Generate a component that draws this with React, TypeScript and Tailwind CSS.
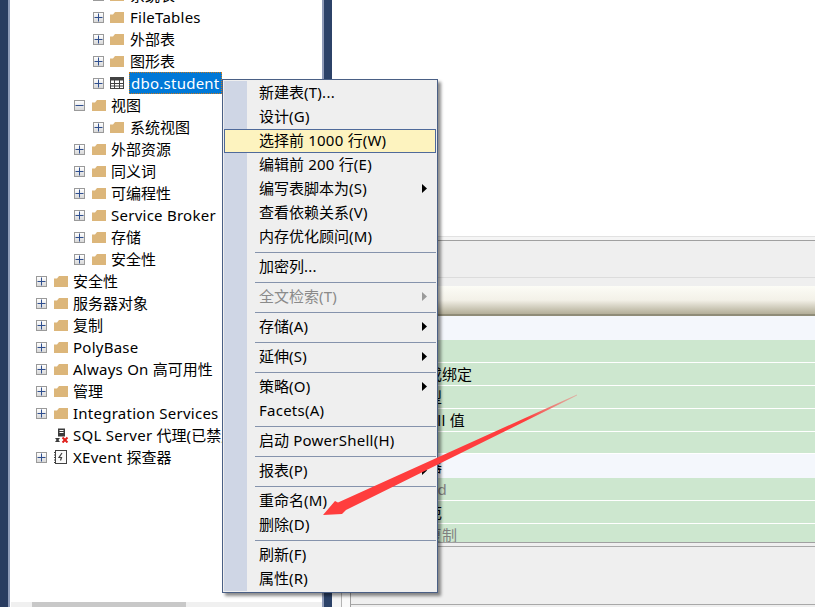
import React from "react";

const Txt = ({ t }: { t: string }) => (
  <>
    {t.split(/([\x00-\x7f]+)/).map((part, i) =>
      /^[\x00-\x7f]+$/.test(part) ? (
        <span key={i} className="tracking-[0.25px]">{part}</span>
      ) : (
        <span key={i}>{part}</span>
      )
    )}
  </>
);

const Box = ({ minus }: { minus?: boolean }) => (
  <span className="w-[11px] h-[11px] border border-[#9a9a9a] bg-gradient-to-b from-white to-[#d8d8d8] flex items-center justify-center relative">
    <svg width="9" height="9" viewBox="0 0 9 9">
      <rect x="0.5" y="4" width="8" height="1" fill="#2f4f8f" />
      {!minus && <rect x="4" y="0.5" width="1" height="8" fill="#2f4f8f" />}
    </svg>
  </span>
);

const Folder = () => (
  <svg width="14" height="12" viewBox="0 0 14 12">
    <path d="M0 3.5 H3 L5 1 H14 V12 H0 Z" fill="#dcb67a" />
  </svg>
);

const TableIcon = () => (
  <svg width="14" height="12" viewBox="0 0 14 12">
    <rect x="0.5" y="0.5" width="13" height="11" fill="#fff" stroke="#424242" />
    <rect x="1" y="1" width="12" height="2.5" fill="#424242" />
    <path d="M1 6.5 H13 M1 9 H13 M4.5 3 V11 M9.5 3 V11" stroke="#424242" strokeWidth="1" />
  </svg>
);

const AgentIcon = () => (
  <svg width="15" height="15" viewBox="0 0 15 15">
    <rect x="4" y="0.5" width="7" height="8" fill="#3b3b3b" />
    <rect x="5.5" y="2" width="4" height="1" fill="#fff" />
    <rect x="5.5" y="4" width="4" height="1" fill="#fff" />
    <path d="M1 10 H6 L4.5 12 L6 14 H1 L2.5 12 Z" fill="#3b3b3b" />
    <path d="M8.5 9.5 L13.5 14.5 M13.5 9.5 L8.5 14.5" stroke="#e0201c" strokeWidth="2" />
  </svg>
);

const XEventIcon = () => (
  <svg width="13" height="14" viewBox="0 0 13 14">
    <rect x="1.5" y="0.5" width="11" height="13" fill="#fafafa" stroke="#424242" />
    <path d="M0 2.5 H2 M0 5 H2 M0 7.5 H2 M0 10 H2 M0 12.5 H2" stroke="#424242" />
    <path d="M8 3 L5 7.5 H7.5 L6.5 10.5" fill="none" stroke="#424242" strokeWidth="1.2" />
  </svg>
);

type Lv = 1 | 2 | 3;
type Row = { t: string; lv: Lv; box?: "plus" | "minus"; icon?: "folder" | "table" | "agent" | "xevent"; sel?: boolean };

const rows: Row[] = [
  { t: "系统表", lv: 3, box: "plus", icon: "folder" },
  { t: "FileTables", lv: 3, box: "plus", icon: "folder" },
  { t: "外部表", lv: 3, box: "plus", icon: "folder" },
  { t: "图形表", lv: 3, box: "plus", icon: "folder" },
  { t: "dbo.student", lv: 3, box: "plus", icon: "table", sel: true },
  { t: "视图", lv: 2, box: "minus", icon: "folder" },
  { t: "系统视图", lv: 3, box: "plus", icon: "folder" },
  { t: "外部资源", lv: 2, box: "plus", icon: "folder" },
  { t: "同义词", lv: 2, box: "plus", icon: "folder" },
  { t: "可编程性", lv: 2, box: "plus", icon: "folder" },
  { t: "Service Broker", lv: 2, box: "plus", icon: "folder" },
  { t: "存储", lv: 2, box: "plus", icon: "folder" },
  { t: "安全性", lv: 2, box: "plus", icon: "folder" },
  { t: "安全性", lv: 1, box: "plus", icon: "folder" },
  { t: "服务器对象", lv: 1, box: "plus", icon: "folder" },
  { t: "复制", lv: 1, box: "plus", icon: "folder" },
  { t: "PolyBase", lv: 1, box: "plus", icon: "folder" },
  { t: "Always On 高可用性", lv: 1, box: "plus", icon: "folder" },
  { t: "管理", lv: 1, box: "plus", icon: "folder" },
  { t: "Integration Services", lv: 1, box: "plus", icon: "folder" },
  { t: "SQL Server 代理(已禁用)", lv: 1, icon: "agent" },
  { t: "XEvent 探查器", lv: 1, box: "plus", icon: "xevent" },
];

const TreeRow = ({ r }: { r: Row }) => {
  const pad = r.lv === 3 ? "pl-[83px]" : r.lv === 2 ? "pl-[64px]" : "pl-[26px]";
  const slot = r.lv === 3 ? "w-[17px]" : "w-[18px]";
  const iconSlot = r.lv === 3 ? "w-[20px]" : "w-[19px]";
  return (
    <div className={`h-[22px] flex items-center shrink-0 whitespace-nowrap ${pad}`}>
      <span className={`${slot} shrink-0 flex`}>{r.box && <Box minus={r.box === "minus"} />}</span>
      <span className={`${iconSlot} shrink-0 flex`}>
        {r.icon === "folder" && <Folder />}
        {r.icon === "table" && <TableIcon />}
        {r.icon === "agent" && <AgentIcon />}
        {r.icon === "xevent" && <XEventIcon />}
      </span>
      {r.sel ? (
        <span className="h-[22px] -ml-px px-px flex items-center bg-[#0078d7] text-white border border-dotted border-[#c87a1e]">
          <span><Txt t={r.t} /></span>
        </span>
      ) : (
        <span className="text-black"><Txt t={r.t} /></span>
      )}
    </div>
  );
};

type Item = { t?: string; sep?: boolean; arrow?: boolean; hi?: boolean; dis?: boolean };
const items: Item[] = [
  { t: "新建表(T)..." },
  { t: "设计(G)" },
  { t: "选择前 1000 行(W)", hi: true },
  { t: "编辑前 200 行(E)" },
  { t: "编写表脚本为(S)", arrow: true },
  { t: "查看依赖关系(V)" },
  { t: "内存优化顾问(M)" },
  { sep: true },
  { t: "加密列..." },
  { sep: true },
  { t: "全文检索(T)", arrow: true, dis: true },
  { sep: true },
  { t: "存储(A)", arrow: true },
  { sep: true },
  { t: "延伸(S)", arrow: true },
  { sep: true },
  { t: "策略(O)", arrow: true },
  { t: "Facets(A)" },
  { sep: true },
  { t: "启动 PowerShell(H)" },
  { sep: true },
  { t: "报表(P)", arrow: true },
  { sep: true },
  { t: "重命名(M)" },
  { t: "删除(D)" },
  { sep: true },
  { t: "刷新(F)" },
  { t: "属性(R)" },
];

const Menu = () => (
  <div className="absolute left-[222px] top-[79px] w-[216px] h-[514px] border border-[#4a5f85] bg-[#efefef] py-px px-px shadow-[3px_3px_3px_rgba(0,0,0,0.45)]">
    <div className="relative flex flex-col h-full">
      <div className="absolute left-0 top-0 bottom-0 w-[23px] bg-[#cfd6e5]" />
      {items.map((it, i) =>
        it.sep ? (
          <div key={i} className="relative h-[6px] shrink-0 flex items-center pl-[31px] pr-0">
            <div className="h-px w-full bg-[#8593ac]" />
          </div>
        ) : (
          <div
            key={i}
            className={`relative h-[24px] shrink-0 flex items-center whitespace-nowrap ${
              it.hi ? "border border-[#4f6a9a] bg-[#fdf3bf] pl-[34px] pb-[2px]" : "pl-[35px] pb-[2px]"
            } ${it.dis ? "text-[#8a8a8a]" : "text-black"}`}
          >
            <span><Txt t={it.t ?? ""} /></span>
            {it.arrow && (
              <svg className="absolute right-[9px] top-[7px]" width="5" height="9" viewBox="0 0 5 9">
                <path d="M0 0 L5 4.5 L0 9 Z" fill={it.dis ? "#9a9a9a" : "#000"} />
              </svg>
            )}
          </div>
        )
      )}
    </div>
  </div>
);

type GR = { t: string; kind: "blue" | "green"; gray?: boolean; h: string };
const grid: GR[] = [
  { t: "(常规)", kind: "blue", h: "h-[24px]" },
  { t: "名称", kind: "green", h: "h-[23px]" },
  { t: "默认值或绑定", kind: "green", h: "h-[23px]" },
  { t: "数据类型", kind: "green", h: "h-[23px]" },
  { t: "允许 Null 值", kind: "green", h: "h-[23px]" },
  { t: "长度", kind: "green", h: "h-[22px]" },
  { t: "表设计器", kind: "blue", h: "h-[24px]" },
  { t: "RowGuid", kind: "green", gray: true, h: "h-[23px]" },
  { t: "标识规范", kind: "green", h: "h-[23px]" },
  { t: "不用于复制", kind: "green", gray: true, h: "h-[23px]" },
];

const Arrow = () => (
  <svg className="absolute left-0 top-0 pointer-events-none" width="815" height="607" viewBox="0 0 815 607">
    <defs>
      <linearGradient id="arrowFade" gradientUnits="userSpaceOnUse" x1="323" y1="515" x2="577" y2="395">
        <stop offset="0" stopColor="#ff3d3d" />
        <stop offset="0.8" stopColor="#ff3d3d" />
        <stop offset="1" stopColor="#e0a89c" stopOpacity="0.8" />
      </linearGradient>
    </defs>
    <polygon points="323,515 335,501 338,502.5 577,394.5 577,395.5 346,510 342,514" fill="url(#arrowFade)" />
  </svg>
);

export default function App() {
  return (
    <div className="relative w-[815px] h-[607px] overflow-hidden flex bg-white text-[15px] leading-[22px] font-['Noto_Sans','Noto_Sans_CJK_SC',sans-serif]">
      <div className="w-2 shrink-0 bg-[#293c60]" />
      <div className="w-[2px] shrink-0 bg-[#8f9bb8]" />
      <div className="w-[312px] shrink-0 flex flex-col">
        <div className="flex-1 min-h-0 overflow-hidden flex flex-col">
          <div className="-mt-[16px] flex flex-col">
            {rows.map((r, i) => (
              <TreeRow key={i} r={r} />
            ))}
          </div>
        </div>
        <div className="h-[5px] shrink-0 ml-px bg-[#f0f0f0] pl-[21px]">
          <div className="w-[154px] h-full bg-[#c8c8c8]" />
        </div>
      </div>
      <div className="w-[2px] shrink-0 bg-[#8f9bb8]" />
      <div className="w-[8px] shrink-0 bg-[#2c4268]" />
      <div className="flex-1 min-w-0 flex flex-col">
        <div className="h-[236px] shrink-0 bg-white" />
        <div className="h-[4px] shrink-0 bg-[#f5f5f5] border-t border-[#e2e2e2]" />
        <div className="flex-1 min-h-0 flex bg-[#f5f5f5] border-t border-[#a0a0a0]">
          <div className="w-[10px] shrink-0 border-r border-[#b4b4b4]" />
          <div className="w-[8px] shrink-0 bg-[#fafafa]" />
          <div className="flex-1 min-w-0 flex flex-col bg-[#efefef] border-l border-[#a0a0a0]">
            <div className="h-[37px] shrink-0 border-b border-[#dcdcdc]" />
            <div className="h-[8px] shrink-0" />
            <div className="h-[28px] shrink-0 bg-gradient-to-b from-[#fcfcf6] via-[#f3f1e8] to-[#b3ae98]" />
            <div className="h-[2px] shrink-0 bg-[#8f8c78]" />
            <div className="h-[226px] shrink-0 overflow-hidden flex flex-col">
              {grid.map((g, i) => (
                <div
                  key={i}
                  className={`${g.h} shrink-0 flex items-center pl-[31px] whitespace-nowrap ${
                    g.kind === "blue" ? "bg-[#f4f7fc]" : "bg-[#cde7cf] border-b border-white"
                  } ${g.gray ? "text-[#808080]" : "text-black"}`}
                >
                  <span><Txt t={g.t} /></span>
                </div>
              ))}
            </div>
            <div className="h-px shrink-0 bg-[#a0a0a0]" />
            <div className="h-[3px] shrink-0" />
            <div className="h-[59px] shrink-0 border-t border-b border-[#a8a8a8]" />
          </div>
        </div>
      </div>
      <Menu />
      <Arrow />
    </div>
  );
}
